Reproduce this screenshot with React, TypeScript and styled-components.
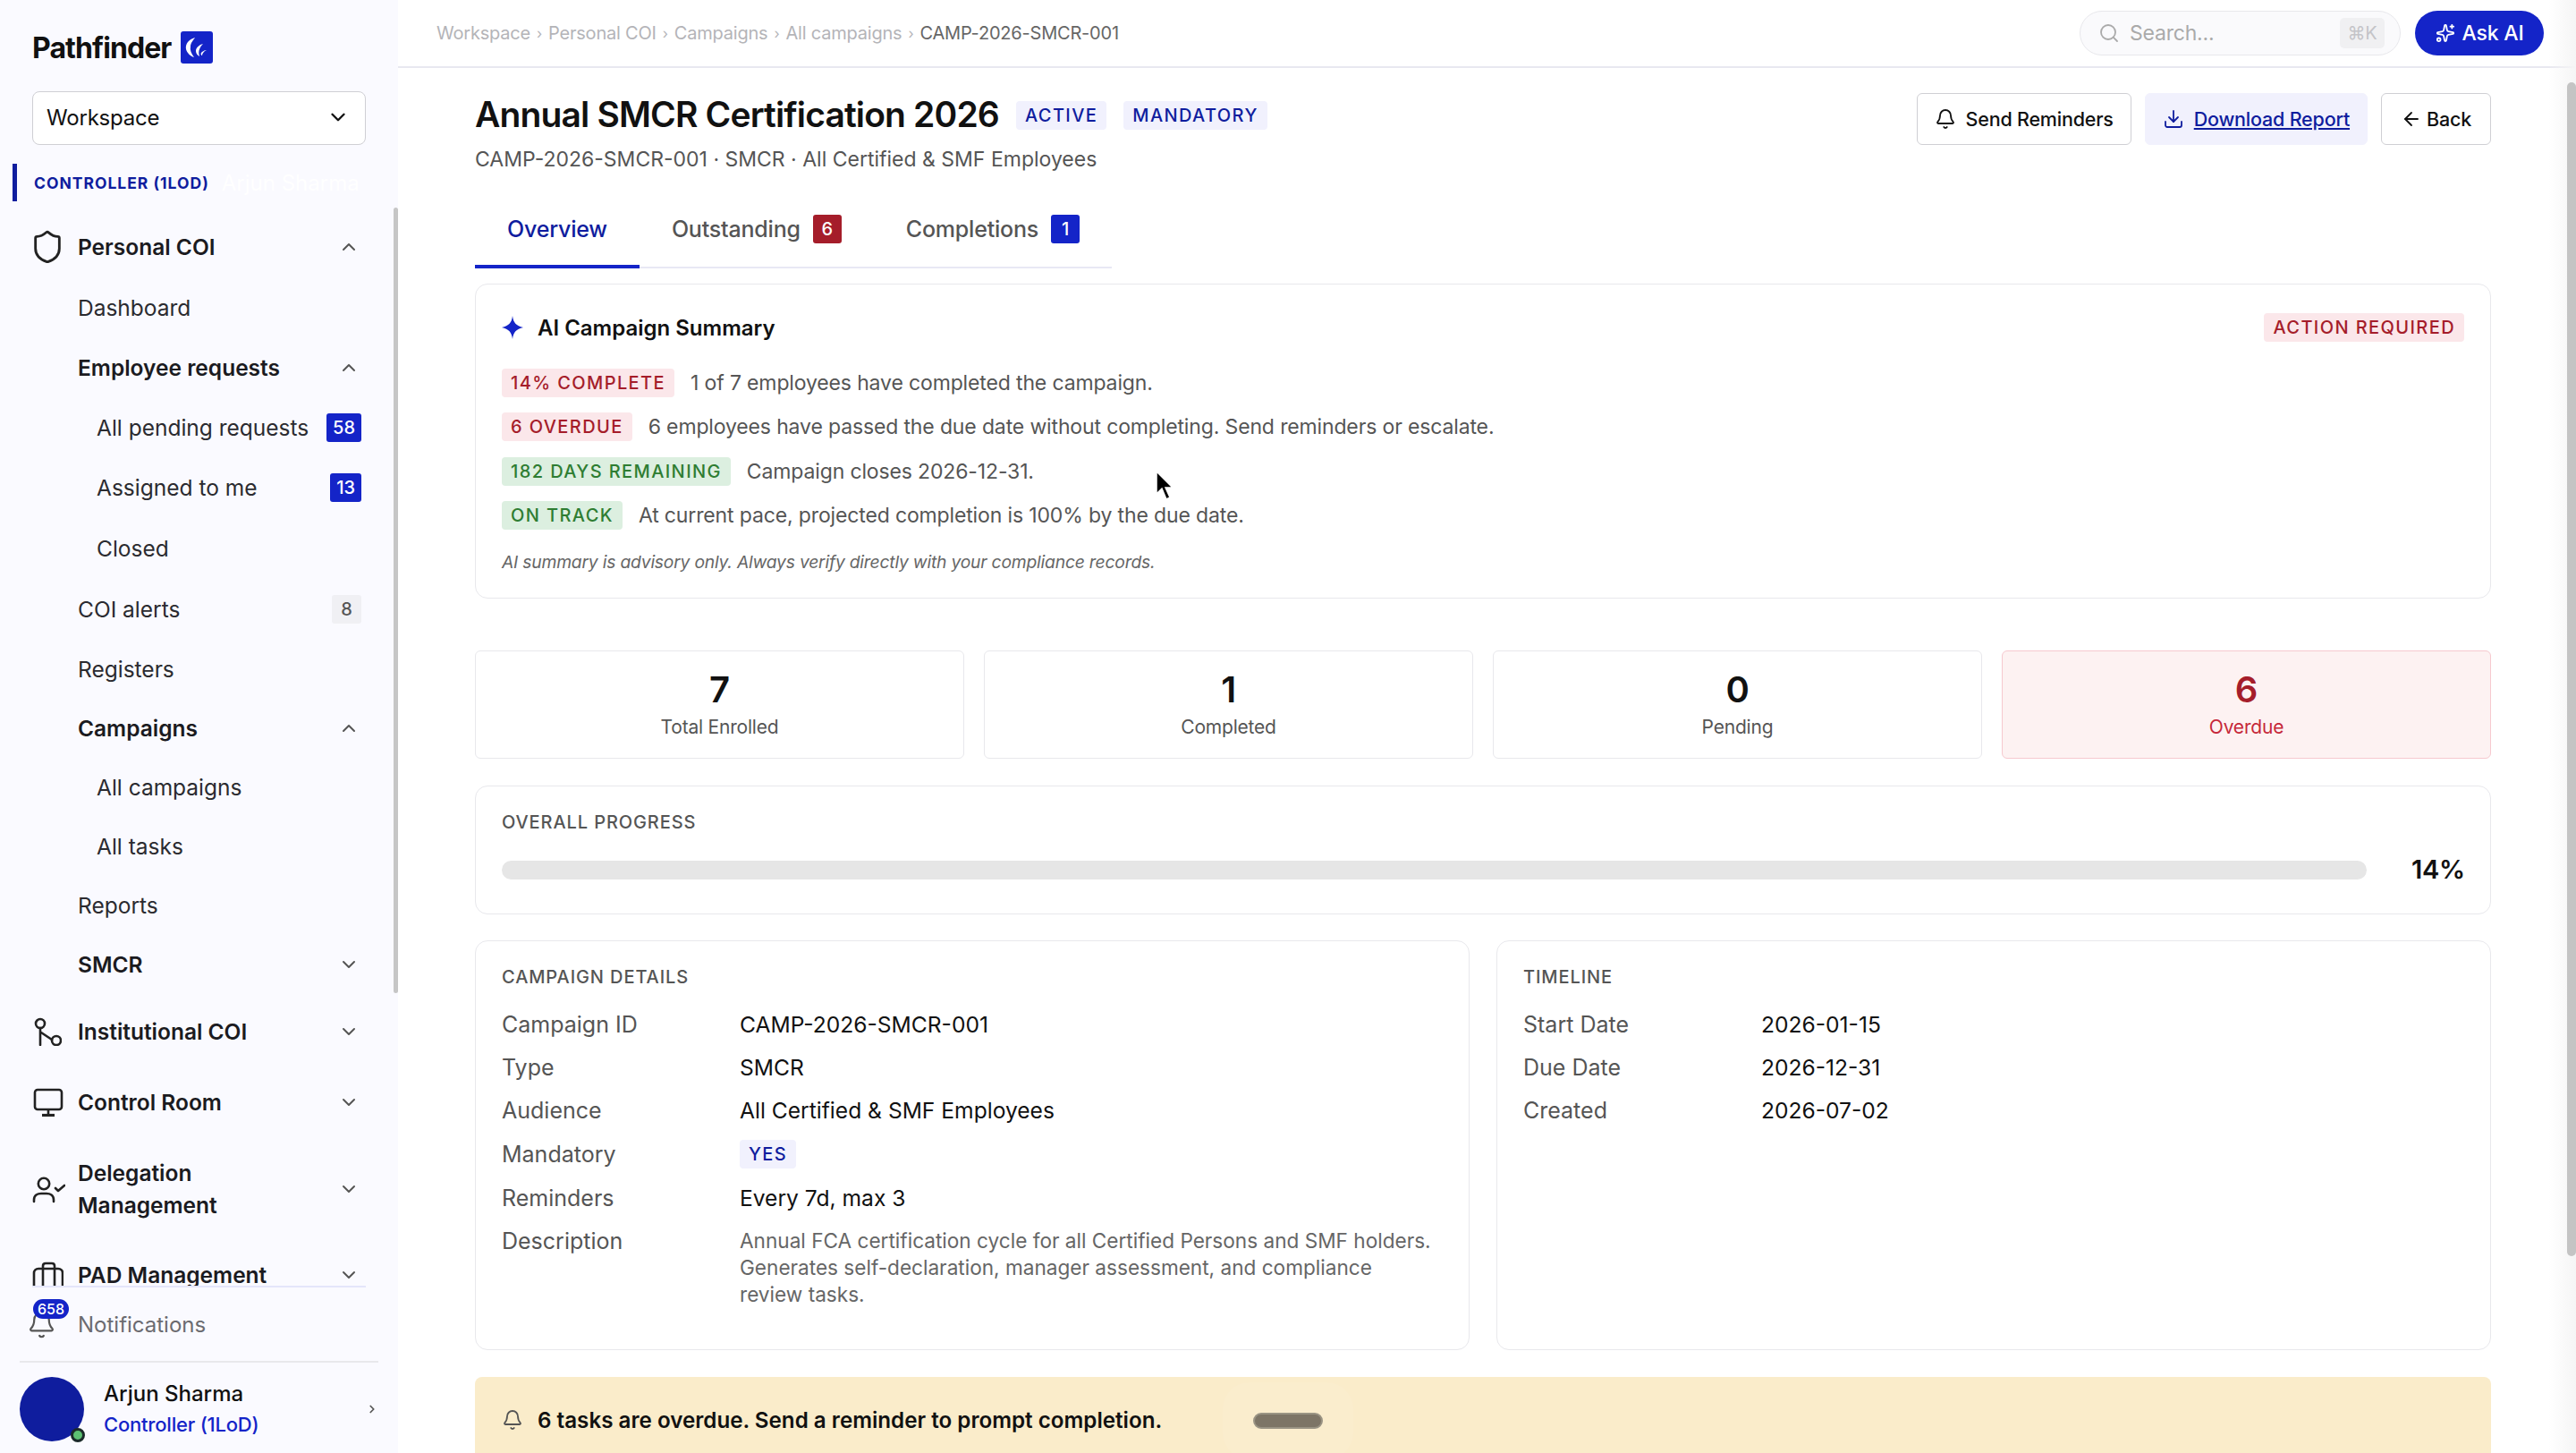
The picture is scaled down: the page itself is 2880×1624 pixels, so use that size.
import React from "react";
import styled, { createGlobalStyle } from "styled-components";
import { ArrowLeft, Bell, ChevronDown, ChevronRight, ChevronUp, Download, Search, Shield, Sparkles } from "lucide-react";

const Global = createGlobalStyle`
  * { box-sizing: border-box; }
  html, body { margin: 0; height: 1624px; overflow: hidden; background: #fff; }
  body { font-family: "Inter", "Noto Sans", sans-serif; color: #111; letter-spacing: -0.2px; }
`;

const Shell = styled.div`
  display: flex;
  width: 2880px;
  height: 1624px;
  overflow: hidden;
`;

/* sidebar */
const Side = styled.aside`
  position: relative;
  flex: 0 0 445px;
  display: flex;
  flex-direction: column;
  background: #fafaff;
`;
const LogoRow = styled.div`
  height: 102px;
  padding: 4px 0 0 36px;
  display: flex;
  align-items: center;
  gap: 10px;
  font-size: 32px;
  font-weight: 700;
  letter-spacing: -0.9px;
`;
const LogoMark = styled.div`
  width: 36px;
  height: 36px;
  border-radius: 3px;
  background: #1424c8;
  display: flex;
`;
const WorkspaceSelect = styled.div`
  margin: 0 36px;
  height: 60px;
  border: 1.5px solid #cfcfd4;
  border-radius: 8px;
  background: #fff;
  display: flex;
  align-items: center;
  justify-content: space-between;
  padding: 0 17px 2px 15px;
  font-size: 24px;
`;
const RoleLabel = styled.div`
  margin: 21px 0 0 14px;
  height: 42px;
  border-left: 5px solid #0f1d9e;
  padding-left: 19px;
  display: flex;
  align-items: center;
  gap: 14px;
  font-size: 17.5px;
  font-weight: 700;
  letter-spacing: 1px;
  color: #0f1d9e;
`;
const RoleGhost = styled.span`
  font-size: 24px;
  font-weight: 400;
  letter-spacing: 0;
  color: #fff;
`;
const Nav = styled.nav`
  margin-top: 7px;
  height: 1206px;
  padding-top: 10px;
  overflow: hidden;
`;
const NavRow = styled.div<{ $h: number; $indent: number; $bold: boolean }>`
  height: ${(p) => p.$h}px;
  padding: 0 41px 0 ${(p) => p.$indent}px;
  display: flex;
  align-items: center;
  font-size: 24.5px;
  letter-spacing: 0;
  font-weight: ${(p) => (p.$bold ? 600 : 400)};
  color: ${(p) => (p.$bold ? "#1b1b1f" : "#2b2b30")};
  line-height: 36px;
`;
const NavIcon = styled.span`
  width: 51px;
  display: flex;
  align-items: center;
  color: #222;
  svg {
    margin-left: -3px;
  }
`;
const NavLabel = styled.span`
  flex: 1;
`;
const CountBadge = styled.span<{ $muted?: boolean }>`
  min-width: 33px;
  height: 32px;
  padding: 0 7px;
  border-radius: 3px;
  display: flex;
  align-items: center;
  justify-content: center;
  font-size: 20px;
  font-weight: 500;
  letter-spacing: 0;
  color: ${(p) => (p.$muted ? "#555" : "#fff")};
  background: ${(p) => (p.$muted ? "#f0f0f4" : "#1424c8")};
`;
const NavChevron = styled.span`
  display: flex;
  margin-right: 2px;
  color: #555;
`;
const SideThumb = styled.div`
  position: absolute;
  right: 0;
  top: 232px;
  width: 5px;
  height: 878px;
  border-radius: 3px;
  background: #c6c6c6;
`;
const NavDivider = styled.div`
  position: absolute;
  left: 36px;
  top: 1437px;
  width: 373px;
  height: 2px;
  background: #e4e6fb;
`;
const NotifyRow = styled.div`
  height: 83px;
  padding: 2px 0 0 87px;
  display: flex;
  align-items: center;
  font-size: 24px;
  letter-spacing: 0;
  color: #6b6b70;
  position: relative;
`;
const NotifyBell = styled.span`
  position: absolute;
  left: 30px;
  top: 26px;
  display: flex;
  color: #555;
`;
const NotifyCount = styled.span`
  position: absolute;
  left: 37px;
  top: 14px;
  width: 40px;
  height: 22px;
  border-radius: 11px;
  background: #1424c8;
  color: #fff;
  font-size: 16px;
  font-weight: 500;
  letter-spacing: 0;
  display: flex;
  align-items: center;
  justify-content: center;
`;
const UserRow = styled.div`
  margin: 0 22px;
  flex: 1;
  border-top: 2px solid #e8e8ec;
  display: flex;
  align-items: center;
  padding: 2px 0 0;
`;
const Avatar = styled.div`
  position: relative;
  width: 72px;
  height: 72px;
  border-radius: 50%;
  background: #0f1d9e;
`;
const OnlineDot = styled.span`
  position: absolute;
  right: -1px;
  bottom: -1px;
  width: 16px;
  height: 16px;
  border-radius: 50%;
  background: #5cc072;
  border: 3px solid #1b2a2a;
`;
const UserText = styled.div`
  flex: 1;
  margin-left: 22px;
  display: flex;
  flex-direction: column;
  gap: 4px;
`;
const UserName = styled.div`
  font-size: 24px;
  font-weight: 500;
  letter-spacing: 0;
  line-height: 30px;
`;
const UserRole = styled.div`
  font-size: 22px;
  font-weight: 500;
  line-height: 30px;
  color: #1424c8;
`;

/* top bar */
const Main = styled.main`
  position: relative;
  flex: 1;
  min-width: 0;
  display: flex;
  flex-direction: column;
`;
const TopBar = styled.header`
  flex: 0 0 76px;
  border-bottom: 2px solid #e8e8f0;
  display: flex;
  align-items: center;
  justify-content: space-between;
  padding: 0 36px 1px 43px;
`;
const Crumbs = styled.div`
  display: flex;
  align-items: center;
  gap: 7px;
  font-size: 20px;
  color: #b4b4b8;
`;
const CrumbSep = styled.span`
  font-size: 16px;
`;
const CrumbNow = styled.span`
  color: #666;
`;
const TopRight = styled.div`
  display: flex;
  gap: 16px;
`;
const SearchBox = styled.div`
  width: 359px;
  height: 50px;
  border: 1.5px solid #e8e8ec;
  border-radius: 25px;
  background: #fafafc;
  display: flex;
  align-items: center;
  padding: 0 17px 0 20px;
  gap: 11px;
  font-size: 23px;
  color: #aaa;
`;
const SearchText = styled.span`
  flex: 1;
`;
const Kbd = styled.span`
  width: 50px;
  height: 34px;
  border-radius: 5px;
  background: #f0f0f2;
  display: flex;
  align-items: center;
  justify-content: center;
  font-size: 20px;
  color: #c4c4c8;
`;
const AskButton = styled.div`
  width: 144px;
  height: 50px;
  border-radius: 25px;
  background: #1424c8;
  color: #fff;
  display: flex;
  align-items: center;
  justify-content: center;
  gap: 8px;
  font-size: 23px;
  font-weight: 500;
`;

/* content */
const Content = styled.div`
  padding: 28px 95px 0 86px;
  display: flex;
  flex-direction: column;
`;
const PageHead = styled.div`
  display: flex;
  justify-content: space-between;
  align-items: flex-start;
`;
const TitleLine = styled.div`
  display: flex;
  align-items: center;
  height: 50px;
  gap: 19px;
`;
const Title = styled.h1`
  margin: 0;
  padding-bottom: 3px;
  font-size: 39px;
  font-weight: 600;
  letter-spacing: -0.85px;
`;
const Tag = styled.span<{ $tone: "blue" | "red" | "green" }>`
  display: inline-flex;
  align-items: center;
  height: 32px;
  padding: 0 10px;
  border-radius: 4px;
  font-size: 20px;
  font-weight: 500;
  letter-spacing: 1.4px;
  white-space: nowrap;
  color: ${(p) => ({ blue: "#0f1d9e", red: "#a51d2a", green: "#2e7d32" }[p.$tone])};
  background: ${(p) => ({ blue: "#f1f1fd", red: "#fbe7ea", green: "#dcefe0" }[p.$tone])};
`;
const Subtitle = styled.div`
  margin-top: 8px;
  font-size: 23px;
  letter-spacing: 0;
  line-height: 32px;
  color: #555;
`;
const HeadActions = styled.div`
  display: flex;
  gap: 15px;
`;
const ActionButton = styled.div<{ $soft?: boolean }>`
  height: 58px;
  padding: 0 19px;
  border-radius: 6px;
  display: flex;
  align-items: center;
  gap: 11px;
  font-size: 21.5px;
  font-weight: 500;
  border: 1.5px solid ${(p) => (p.$soft ? "#f1f1fd" : "#cfcfd4")};
  background: ${(p) => (p.$soft ? "#f1f1fd" : "#fff")};
  color: ${(p) => (p.$soft ? "#0f1d9e" : "#111")};
  text-decoration: ${(p) => (p.$soft ? "underline" : "none")};
`;
const BackButton = styled(ActionButton)`
  padding: 0 21px;
  gap: 5px;
`;
const TabsRow = styled.div`
  margin-top: 18px;
  width: 712px;
  display: flex;
  border-bottom: 2px solid #e8e8f4;
`;
const Tab = styled.div<{ $active?: boolean }>`
  height: 88px;
  margin-bottom: -2px;
  padding: 3px 36px 0;
  display: flex;
  align-items: center;
  gap: 14px;
  font-size: 25px;
  font-weight: 500;
  color: ${(p) => (p.$active ? "#0f1d9e" : "#555")};
  border-bottom: 4px solid ${(p) => (p.$active ? "#1424c8" : "transparent")};
`;
const TabCount = styled.span<{ $red?: boolean }>`
  width: 32px;
  height: 32px;
  border-radius: 3px;
  display: flex;
  align-items: center;
  justify-content: center;
  font-size: 20px;
  color: #fff;
  background: ${(p) => (p.$red ? "#a51d2a" : "#1424c8")};
`;
const Card = styled.section`
  border: 1.5px solid #e8e8ec;
  border-radius: 14px;
  background: #fff;
`;
const SummaryCard = styled(Card)`
  margin-top: 17px;
  height: 352px;
  padding: 31px 29px 0;
`;
const SummaryHead = styled.div`
  display: flex;
  align-items: center;
  justify-content: space-between;
  height: 34px;
`;
const SummaryTitle = styled.div`
  display: flex;
  align-items: center;
  gap: 16px;
  font-size: 24px;
  font-weight: 600;
  letter-spacing: 0;
`;
const SummaryRows = styled.div`
  margin-top: 29px;
  display: flex;
  flex-direction: column;
  gap: 17.3px;
`;
const SummaryRow = styled.div`
  display: flex;
  align-items: center;
  gap: 18px;
  font-size: 23px;
  letter-spacing: -0.14px;
  color: #555;
`;
const SummaryNote = styled.div`
  margin-top: 20px;
  line-height: 32px;
  font-size: 19.3px;
  font-style: italic;
  color: #666;
`;
const Stats = styled.div`
  margin-top: 58px;
  display: grid;
  grid-template-columns: repeat(4, 1fr);
  gap: 22px;
`;
const Stat = styled.div<{ $alert?: boolean }>`
  height: 121px;
  padding-bottom: 1px;
  border: 1.5px solid ${(p) => (p.$alert ? "#f6c9cf" : "#e8e8ec")};
  border-radius: 6px;
  background: ${(p) => (p.$alert ? "#fdf2f2" : "#fff")};
  display: flex;
  flex-direction: column;
  align-items: center;
  justify-content: center;
`;
const StatValue = styled.div<{ $alert?: boolean }>`
  font-size: 40px;
  font-weight: 600;
  line-height: 48px;
  color: ${(p) => (p.$alert ? "#a51d2a" : "#111")};
`;
const StatLabel = styled.div<{ $alert?: boolean }>`
  font-size: 21px;
  line-height: 30px;
  margin-top: 3px;
  color: ${(p) => (p.$alert ? "#c62839" : "#555")};
`;
const ProgressCard = styled(Card)`
  margin-top: 30px;
  height: 144px;
  padding: 28px 28px 0 29px;
`;
const SectionLabel = styled.div`
  font-size: 20px;
  font-weight: 500;
  line-height: 24px;
  letter-spacing: 0.9px;
  color: #555;
`;
const ProgressRow = styled.div`
  margin-top: 21px;
  display: flex;
  align-items: center;
  gap: 50px;
`;
const ProgressTrack = styled.div`
  flex: 1;
  height: 21px;
  border-radius: 11px;
  background: #e6e6e6;
`;
const ProgressValue = styled.div`
  font-size: 29px;
  font-weight: 600;
  line-height: 40px;
`;
const DetailColumns = styled.div`
  margin-top: 29px;
  display: flex;
  gap: 30px;
`;
const DetailCard = styled(Card)`
  flex: 1;
  min-width: 0;
  height: 458px;
  padding: 28px 29px 0;
`;
const DetailGrid = styled.div`
  margin-top: 17px;
  display: grid;
  grid-template-columns: 266px 1fr;
  grid-auto-rows: minmax(48px, auto);
  align-items: center;
`;
const DetailKey = styled.div<{ $top?: boolean }>`
  color: #555;
  font-size: 25px;
  letter-spacing: 0;
  align-self: ${(p) => (p.$top ? "start" : "center")};
  padding-top: ${(p) => (p.$top ? "9px" : "0")};
  line-height: 30px;
`;
const DetailValue = styled.div`
  color: #111;
  font-size: 24.6px;
  letter-spacing: 0;
`;
const YesCell = styled.div`
  padding: 9px 0;
  display: flex;
`;
const Description = styled.div`
  max-width: 778px;
  padding-top: 9px;
  font-size: 22.6px;
  letter-spacing: 0;
  line-height: 30px;
  color: #666;
`;
const Banner = styled.div`
  position: relative;
  margin-top: 30px;
  height: 96px;
  border-radius: 8px 8px 0 0;
  background: #faecca;
  display: flex;
  align-items: center;
  gap: 16px;
  padding: 0 30px;
  font-size: 24.2px;
  letter-spacing: 0;
  font-weight: 600;
`;
const DragPill = styled.span`
  position: absolute;
  left: 870px;
  top: 40px;
  width: 78px;
  height: 18px;
  border-radius: 9px;
  background: #7d7566;
  border: 2px solid #9a9484;
  box-shadow: 0 0 0 34px rgba(255, 255, 255, 0.06);
`;
const Cursor = styled.svg`
  position: absolute;
  left: 846px;
  top: 526px;
`;
const MainThumb = styled.div`
  position: absolute;
  right: 0;
  top: 92px;
  width: 10px;
  height: 1312px;
  border-radius: 5px;
  background: #c4c4c4;
`;
const ScrollEdge = styled.div`
  position: absolute;
  right: 0;
  top: 0;
  bottom: 0;
  width: 30px;
  background: linear-gradient(to right, rgba(245, 245, 245, 0), #f5f5f5);
`;

const LogoGlyph = () => (
  <svg width="36" height="36" viewBox="0 0 36 36" fill="#fff">
    <path d="M16 7C9 9 5 14 6 20c1 4 5 8 9 9-3-4-5-8-4-12 0-4 3-7 5-10z" />
    <path d="M25 14c-4 1-8 4-8 8 0 3 2 5 4 6-1-3-1-6 0-8 1-3 3-5 4-6z" />
    <path d="M29 21c-3 0-5 2-6 3-1 1 0 3 1 3 0-2 2-5 5-6z" />
  </svg>
);
const RouteIcon = () => (
  <svg width="36" height="32" viewBox="0 0 36 32" fill="none" stroke="#222" strokeWidth="2.6" strokeLinecap="round">
    <circle cx="12" cy="7" r="5" />
    <circle cx="30" cy="26" r="5" />
    <path d="M12 12v19M13 17l12 8" />
  </svg>
);
const ScreenIcon = () => (
  <svg width="38" height="32" viewBox="0 0 38 32" fill="none" stroke="#222" strokeWidth="2.6">
    <rect x="6" y="2" width="30" height="22" rx="3" />
    <path d="M21 24v6" />
    <path d="M14 30.5h14" strokeWidth="3.2" />
  </svg>
);
const DelegateIcon = () => (
  <svg width="40" height="32" viewBox="0 0 40 32" fill="none" stroke="#222" strokeWidth="2.6" strokeLinecap="round" strokeLinejoin="round">
    <circle cx="16" cy="10" r="6.2" />
    <path d="M5 30v-2c0-5 4-7 8-7h6c4 0 8 2 8 7v2" />
    <path d="M29 15l3 3 7-6" />
  </svg>
);
const PadIcon = () => (
  <svg width="38" height="34" viewBox="0 0 38 34" fill="none" stroke="#222" strokeWidth="2.6">
    <path d="M5 34V15c0-3 2-5 5-5h22c3 0 5 2 5 5v19M15 34V7c0-2 1-3 3-3h7c2 0 3 1 3 3v27" />
  </svg>
);
const FourStar = () => (
  <svg width="24" height="26" viewBox="0 0 24 26" fill="#1424c8">
    <path d="M12 0c1 8 4 11 12 13-8 2-11 5-12 13-1-8-4-11-12-13 8-2 11-5 12-13z" />
  </svg>
);

type Item = {
  label: React.ReactNode;
  h: number;
  indent: number;
  bold?: boolean;
  icon?: React.ReactNode;
  open?: boolean;
  badge?: string;
  muted?: boolean;
};

const items: Item[] = [
  { label: "Personal COI", h: 68, indent: 36, bold: true, open: true, icon: <Shield size={40} strokeWidth={1.7} /> },
  { label: "Dashboard", h: 68, indent: 87 },
  { label: "Employee requests", h: 66, indent: 87, bold: true, open: true },
  { label: "All pending requests", h: 67, indent: 108, badge: "58" },
  { label: "Assigned to me", h: 68, indent: 108, badge: "13" },
  { label: "Closed", h: 68, indent: 108 },
  { label: "COI alerts", h: 67, indent: 87, badge: "8", muted: true },
  { label: "Registers", h: 67, indent: 87 },
  { label: "Campaigns", h: 66, indent: 87, bold: true, open: true },
  { label: "All campaigns", h: 66, indent: 108 },
  { label: "All tasks", h: 66, indent: 108 },
  { label: "Reports", h: 66, indent: 87 },
  { label: "SMCR", h: 66, indent: 87, bold: true, open: false },
  { label: "Institutional COI", h: 84, indent: 36, bold: true, open: false, icon: <RouteIcon /> },
  { label: "Control Room", h: 74, indent: 36, bold: true, open: false, icon: <ScreenIcon /> },
  { label: "Delegation Management", h: 120, indent: 36, bold: true, open: false, icon: <DelegateIcon /> },
  { label: "PAD Management", h: 72, indent: 36, bold: true, open: false, icon: <PadIcon /> },
];

const summary: { tag: string; tone: "red" | "green"; text: string }[] = [
  { tag: "14% COMPLETE", tone: "red", text: "1 of 7 employees have completed the campaign." },
  { tag: "6 OVERDUE", tone: "red", text: "6 employees have passed the due date without completing. Send reminders or escalate." },
  { tag: "182 DAYS REMAINING", tone: "green", text: "Campaign closes 2026-12-31." },
  { tag: "ON TRACK", tone: "green", text: "At current pace, projected completion is 100% by the due date." },
];

const stats = [
  { value: "7", label: "Total Enrolled" },
  { value: "1", label: "Completed" },
  { value: "0", label: "Pending" },
  { value: "6", label: "Overdue", alert: true },
];

const crumbs = ["Workspace", "Personal COI", "Campaigns", "All campaigns"];

export default function App() {
  return (
    <Shell>
      <Global />
      <Side>
        <LogoRow>
          Pathfinder
          <LogoMark>
            <LogoGlyph />
          </LogoMark>
        </LogoRow>
        <WorkspaceSelect>
          Workspace
          <ChevronDown size={26} strokeWidth={2.2} />
        </WorkspaceSelect>
        <RoleLabel>
          CONTROLLER (1LOD)
          <RoleGhost>Arjun Sharma</RoleGhost>
        </RoleLabel>
        <Nav>
          {items.map((it, i) => (
            <NavRow key={i} $h={it.h} $indent={it.indent} $bold={!!it.bold}>
              {it.icon && <NavIcon>{it.icon}</NavIcon>}
              <NavLabel>{it.label === "Delegation Management" ? <>Delegation<br />Management</> : it.label}</NavLabel>
              {it.badge && <CountBadge $muted={it.muted}>{it.badge}</CountBadge>}
              {it.open === true && (
                <NavChevron>
                  <ChevronUp size={24} />
                </NavChevron>
              )}
              {it.open === false && (
                <NavChevron>
                  <ChevronDown size={24} />
                </NavChevron>
              )}
            </NavRow>
          ))}
        </Nav>
        <SideThumb />
        <NavDivider />
        <NotifyRow>
          <NotifyBell>
            <Bell size={33} strokeWidth={1.6} />
          </NotifyBell>
          <NotifyCount>658</NotifyCount>
          Notifications
        </NotifyRow>
        <UserRow>
          <Avatar>
            <OnlineDot />
          </Avatar>
          <UserText>
            <UserName>Arjun Sharma</UserName>
            <UserRole>Controller (1LoD)</UserRole>
          </UserText>
          <ChevronRight size={14} strokeWidth={3} color="#555" />
        </UserRow>
      </Side>

      <Main>
        <TopBar>
          <Crumbs>
            {crumbs.map((c) => (
              <React.Fragment key={c}>
                <span>{c}</span>
                <CrumbSep>›</CrumbSep>
              </React.Fragment>
            ))}
            <CrumbNow>CAMP-2026-SMCR-001</CrumbNow>
          </Crumbs>
          <TopRight>
            <SearchBox>
              <Search size={24} strokeWidth={1.8} color="#aaa" />
              <SearchText>Search...</SearchText>
              <Kbd>⌘K</Kbd>
            </SearchBox>
            <AskButton>
              <Sparkles size={22} />
              Ask AI
            </AskButton>
          </TopRight>
        </TopBar>

        <Content>
          <PageHead>
            <div>
              <TitleLine>
                <Title>Annual SMCR Certification 2026</Title>
                <Tag $tone="blue">ACTIVE</Tag>
                <Tag $tone="blue">MANDATORY</Tag>
              </TitleLine>
              <Subtitle>CAMP-2026-SMCR-001 · SMCR · All Certified &amp; SMF Employees</Subtitle>
            </div>
            <HeadActions>
              <ActionButton>
                <Bell size={24} strokeWidth={1.8} />
                Send Reminders
              </ActionButton>
              <ActionButton $soft>
                <Download size={24} strokeWidth={1.8} />
                Download Report
              </ActionButton>
              <BackButton>
                <ArrowLeft size={24} strokeWidth={1.8} />
                Back
              </BackButton>
            </HeadActions>
          </PageHead>

          <TabsRow>
            <Tab $active>Overview</Tab>
            <Tab>
              Outstanding
              <TabCount $red>6</TabCount>
            </Tab>
            <Tab>
              Completions
              <TabCount>1</TabCount>
            </Tab>
          </TabsRow>

          <SummaryCard>
            <SummaryHead>
              <SummaryTitle>
                <FourStar />
                AI Campaign Summary
              </SummaryTitle>
              <Tag $tone="red">ACTION REQUIRED</Tag>
            </SummaryHead>
            <SummaryRows>
              {summary.map((s) => (
                <SummaryRow key={s.tag}>
                  <Tag $tone={s.tone}>{s.tag}</Tag>
                  {s.text}
                </SummaryRow>
              ))}
            </SummaryRows>
            <SummaryNote>AI summary is advisory only. Always verify directly with your compliance records.</SummaryNote>
          </SummaryCard>

          <Stats>
            {stats.map((s) => (
              <Stat key={s.label} $alert={s.alert}>
                <StatValue $alert={s.alert}>{s.value}</StatValue>
                <StatLabel $alert={s.alert}>{s.label}</StatLabel>
              </Stat>
            ))}
          </Stats>

          <ProgressCard>
            <SectionLabel>OVERALL PROGRESS</SectionLabel>
            <ProgressRow>
              <ProgressTrack />
              <ProgressValue>14%</ProgressValue>
            </ProgressRow>
          </ProgressCard>

          <DetailColumns>
            <DetailCard>
              <SectionLabel>CAMPAIGN DETAILS</SectionLabel>
              <DetailGrid>
                <DetailKey>Campaign ID</DetailKey>
                <DetailValue>CAMP-2026-SMCR-001</DetailValue>
                <DetailKey>Type</DetailKey>
                <DetailValue>SMCR</DetailValue>
                <DetailKey>Audience</DetailKey>
                <DetailValue>All Certified &amp; SMF Employees</DetailValue>
                <DetailKey>Mandatory</DetailKey>
                <YesCell>
                  <Tag $tone="blue">YES</Tag>
                </YesCell>
                <DetailKey>Reminders</DetailKey>
                <DetailValue>Every 7d, max 3</DetailValue>
                <DetailKey $top>Description</DetailKey>
                <Description>
                  Annual FCA certification cycle for all Certified Persons and SMF holders. Generates self-declaration, manager assessment, and compliance review tasks.
                </Description>
              </DetailGrid>
            </DetailCard>
            <DetailCard>
              <SectionLabel>TIMELINE</SectionLabel>
              <DetailGrid>
                <DetailKey>Start Date</DetailKey>
                <DetailValue>2026-01-15</DetailValue>
                <DetailKey>Due Date</DetailKey>
                <DetailValue>2026-12-31</DetailValue>
                <DetailKey>Created</DetailKey>
                <DetailValue>2026-07-02</DetailValue>
              </DetailGrid>
            </DetailCard>
          </DetailColumns>

          <Banner>
            <Bell size={24} strokeWidth={1.8} color="#555" />
            6 tasks are overdue. Send a reminder to prompt completion.
            <DragPill />
          </Banner>
        </Content>

        <ScrollEdge />
        <MainThumb />
        <Cursor width="22" height="34" viewBox="0 0 22 34">
          <path d="M2 1v25l6-6 5 12 4-2-5-11h8z" fill="#000" stroke="#fff" strokeWidth="1.5" />
        </Cursor>
      </Main>
    </Shell>
  );
}
